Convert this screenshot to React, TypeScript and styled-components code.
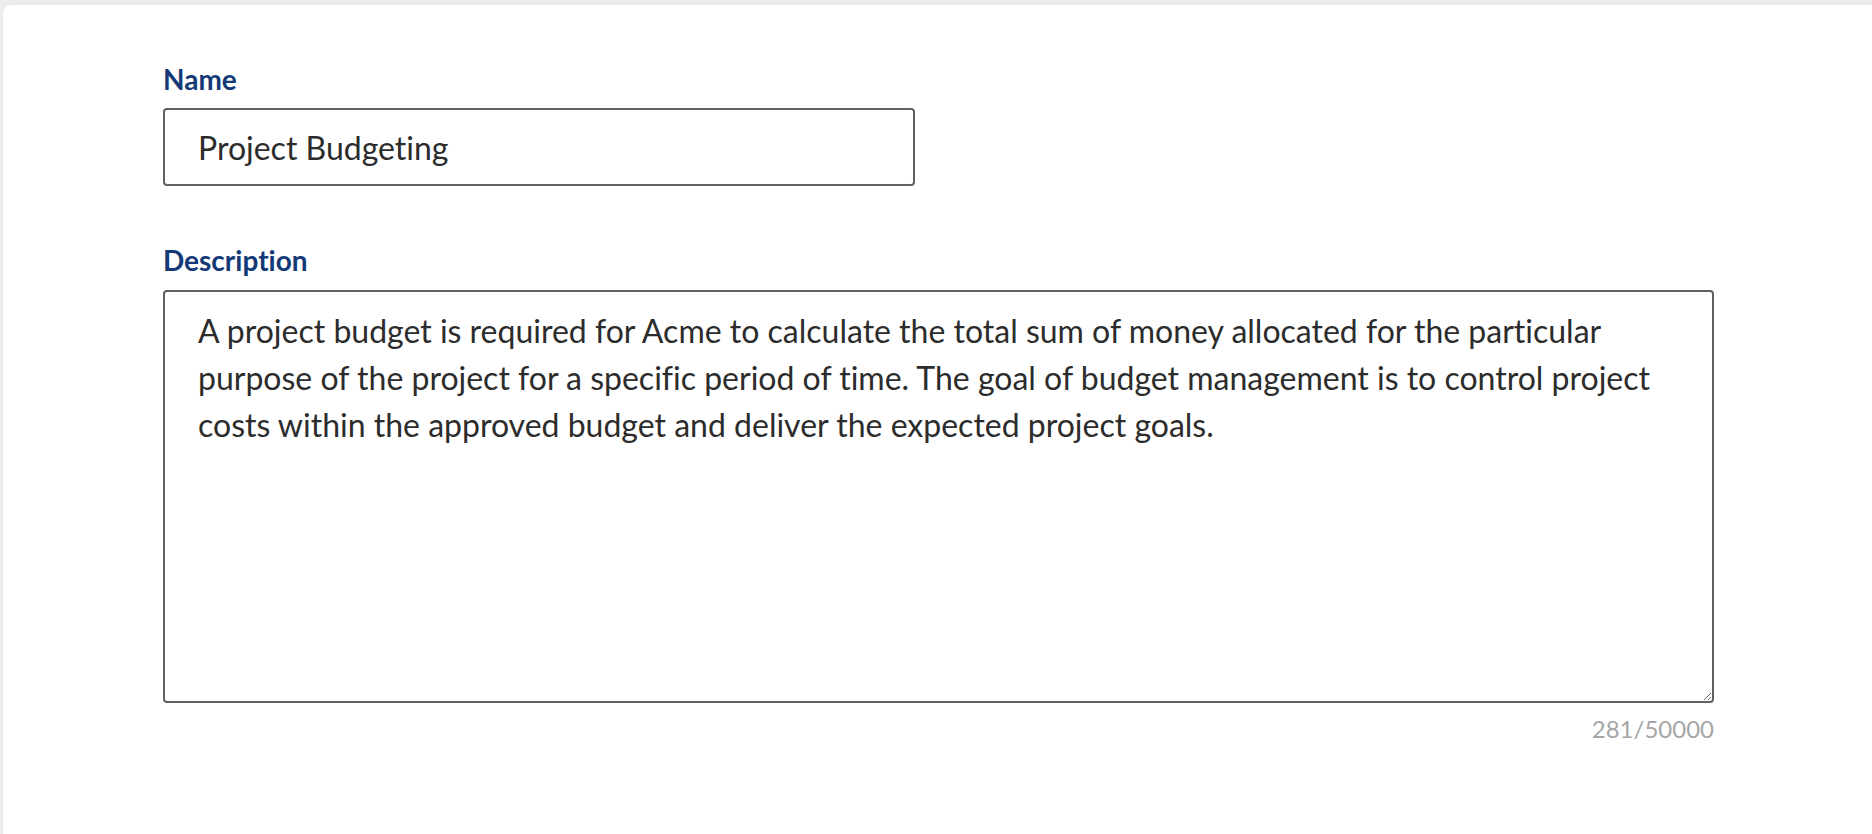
import styled, { createGlobalStyle } from "styled-components";

const GlobalStyle = createGlobalStyle`
  html, body {
    margin: 0;
    padding: 0;
    background: #ececec;
  }
  body {
    font-family: Lato, "Open Sans", sans-serif;
    font-variant-ligatures: none;
  }
`;

const Page = styled.div`
  min-height: 834px;
  padding: 5px 0 0 3px;
  box-sizing: border-box;
  display: flex;
`;

const Card = styled.form`
  flex: 1;
  background: #ffffff;
  border-top-left-radius: 8px;
  padding: 58px 158px 0 160px;
  display: flex;
  flex-direction: column;
`;

const Label = styled.label<{ $top?: number; $bottom?: number }>`
  display: block;
  margin-top: ${(p) => p.$top ?? 0}px;
  margin-bottom: ${(p) => p.$bottom ?? 13}px;
  font-family: Lato, sans-serif;
  font-weight: 700;
  font-size: 28px;
  line-height: 32px;
  color: #133a77;
  font-variant-ligatures: none;
`;

const TextInput = styled.input`
  width: 752px;
  height: 78px;
  box-sizing: border-box;
  border: 2px solid #616161;
  border-radius: 4px;
  padding: 0 33px;
  font-family: Lato, sans-serif;
  font-size: 32px;
  color: #2c2c2c;
  outline: none;
  background: #fff;
  font-variant-ligatures: none;
`;

const TextArea = styled.textarea`
  width: 100%;
  height: 413px;
  box-sizing: border-box;
  border: 2px solid #616161;
  border-radius: 4px;
  padding: 15px 33px 14px;
  font-family: Lato, sans-serif;
  font-size: 32px;
  line-height: 47px;
  color: #2c2c2c;
  outline: none;
  resize: vertical;
  background: #fff;
  display: block;
  font-variant-ligatures: none;
`;

const Counter = styled.div`
  margin-top: 12px;
  text-align: right;
  font-family: Lato, sans-serif;
  font-size: 24px;
  line-height: 28px;
  color: #a6a6a6;
`;

const description =
  "A project budget is required for Acme to calculate the total sum of money allocated for the particular purpose of the project for a specific period of time. The goal of budget management is to control project costs within the approved budget and deliver the expected project goals.";

export default function App() {
  return (
    <>
      <GlobalStyle />
      <Page>
        <Card onSubmit={(e) => e.preventDefault()}>
          <Label htmlFor="name">Name</Label>
          <TextInput id="name" defaultValue="Project Budgeting" />
          <Label htmlFor="desc" $top={58} $bottom={14}>
            Description
          </Label>
          <TextArea id="desc" defaultValue={description} />
          <Counter>{description.length}/50000</Counter>
        </Card>
      </Page>
    </>
  );
}
